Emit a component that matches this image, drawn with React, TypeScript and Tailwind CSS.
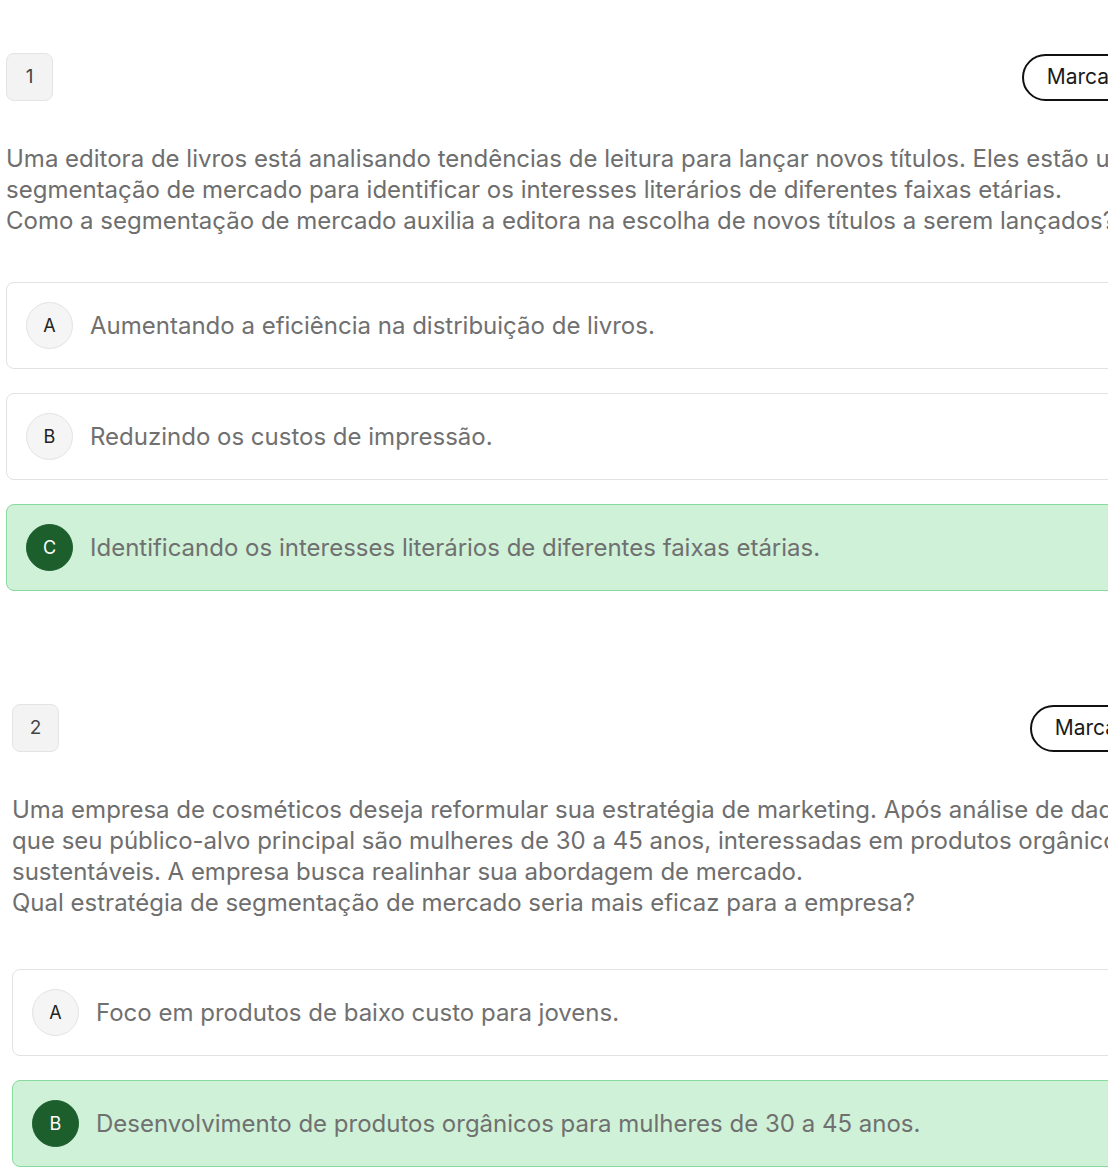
import React from "react";

interface Option {
  letter: string;
  text: string;
  correct?: boolean;
}

interface Question {
  number: number;
  lines: string[];
  options: Option[];
  offset: string;
  width: string;
  optionsTop: string;
}

const questions: Question[] = [
  {
    number: 1,
    offset: "pl-[6px]",
    width: "w-[1264px]",
    optionsTop: "mt-[46px]",
    lines: [
      "Uma editora de livros está analisando tendências de leitura para lançar novos títulos. Eles estão utilizando a segmentação de mercado para identificar os interesses literários de diferentes faixas etárias.",
      "Como a segmentação de mercado auxilia a editora na escolha de novos títulos a serem lançados?",
    ],
    options: [
      { letter: "A", text: "Aumentando a eficiência na distribuição de livros." },
      { letter: "B", text: "Reduzindo os custos de impressão." },
      { letter: "C", text: "Identificando os interesses literários de diferentes faixas etárias.", correct: true },
    ],
  },
  {
    number: 2,
    offset: "pl-[12px]",
    width: "w-[1266px]",
    optionsTop: "mt-[51px]",
    lines: [
      "Uma empresa de cosméticos deseja reformular sua estratégia de marketing. Após análise de dados, identificou que seu público-alvo principal são mulheres de 30 a 45 anos, interessadas em produtos orgânicos e sustentáveis. A empresa busca realinhar sua abordagem de mercado.",
      "Qual estratégia de segmentação de mercado seria mais eficaz para a empresa?",
    ],
    options: [
      { letter: "A", text: "Foco em produtos de baixo custo para jovens." },
      { letter: "B", text: "Desenvolvimento de produtos orgânicos para mulheres de 30 a 45 anos.", correct: true },
    ],
  },
];

function OptionRow({ option }: { option: Option }) {
  const box = option.correct
    ? "bg-[#cff1d8] border-[#86db9d]"
    : "bg-white border-[#e2e2e2]";
  const circle = option.correct
    ? "bg-[#1c5f2c] border-[#1c5f2c] text-white"
    : "bg-[#f5f5f5] border-[#e3e3e3] text-[#222]";
  return (
    <div className={`flex items-center gap-[17px] h-[87px] pl-[19px] rounded-lg border ${box}`}>
      <div
        className={`w-[47px] h-[47px] shrink-0 rounded-full border flex items-center justify-center text-[18px] ${circle}`}
      >
        {option.letter}
      </div>
      <span className="text-[24px] text-[#707070] whitespace-nowrap">{option.text}</span>
    </div>
  );
}

function QuestionBlock({ q }: { q: Question }) {
  return (
    <div className={q.offset}>
      <div className={q.width}>
        {/* Header */}
        <div className="flex items-center justify-between">
          <div className="w-[47px] h-[48px] rounded-lg bg-[#f3f3f3] border border-[#e4e4e4] flex items-center justify-center text-[19px] text-[#444]">
            {q.number}
          </div>
          <button className="h-[47px] px-[23px] rounded-full border-2 border-[#111] text-[21px] text-[#1a1a1a] whitespace-nowrap">
            Marcar para revisão
          </button>
        </div>

        {/* Statement */}
        <div className="mt-[42px] text-[24px] leading-[31px] text-[#6e6e6e]">
          {q.lines.map((l, i) => (
            <p key={i}>{l}</p>
          ))}
        </div>

        {/* Options */}
        <div className={`${q.optionsTop} flex flex-col gap-[24px]`}>
          {q.options.map((o) => (
            <OptionRow key={o.letter} option={o} />
          ))}
        </div>
      </div>
    </div>
  );
}

export default function App() {
  return (
    <div className="w-[1108px] h-[1171px] overflow-hidden bg-white font-['Inter',sans-serif]">
      <div className="pt-[53px] flex flex-col gap-[113px]">
        {questions.map((q) => (
          <QuestionBlock key={q.number} q={q} />
        ))}
      </div>
    </div>
  );
}
